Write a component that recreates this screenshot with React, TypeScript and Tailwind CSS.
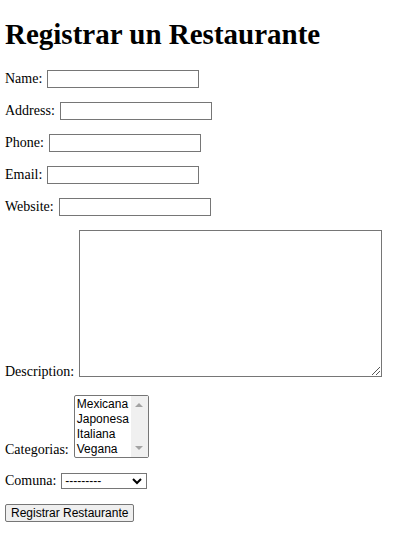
const fields = [
  { id: "name", label: "Name:", type: "text" },
  { id: "address", label: "Address:", type: "text" },
  { id: "phone", label: "Phone:", type: "tel" },
  { id: "email", label: "Email:", type: "email" },
  { id: "website", label: "Website:", type: "url" },
];

const categories = ["Mexicana", "Japonesa", "Italiana", "Vegana"];

export default function App() {
  return (
    <main className="bg-white px-[5px] pt-4 font-['Liberation_Serif',serif] text-sm leading-[18px] text-black">
      <h1 className="mb-[18px] text-[29px] leading-9 font-bold">Registrar un Restaurante</h1>
      <form className="flex flex-col items-start gap-[14px]" onSubmit={(e) => e.preventDefault()}>
        {fields.map((f) => (
          <div key={f.id} className="flex items-center gap-[5px]">
            <label htmlFor={f.id}>{f.label}</label>
            <input
              id={f.id}
              type={f.type}
              className="h-[18px] w-[152px] border border-[#767676] bg-white px-0.5 font-['Liberation_Sans',sans-serif] text-xs"
            />
          </div>
        ))}

        <div className="flex items-end gap-[5px] pb-1">
          <label htmlFor="description" className="leading-[10px]">
            Description:
          </label>
          <div className="relative flex">
            <textarea
              id="description"
              className="h-[147px] w-[303px] resize-none border border-[#767676] bg-white p-0.5 font-['Liberation_Mono',monospace] text-xs"
            />
            <svg
              aria-hidden="true"
              className="pointer-events-none absolute right-0.5 bottom-0.5 h-2 w-2"
              viewBox="0 0 8 8"
              stroke="#555"
              fill="none"
            >
              <path d="M0 8 8 0M4 8 8 4" />
            </svg>
          </div>
        </div>

        <div className="flex items-end gap-[5px]">
          <label htmlFor="categorias" className="leading-4">
            Categorias:
          </label>
          <div className="relative flex">
            <select
              id="categorias"
              multiple
              size={4}
              className="h-[63px] w-[75px] overflow-hidden rounded-xs border border-[#767676] bg-white font-['Liberation_Sans',sans-serif] text-xs"
            >
              {categories.map((c) => (
                <option key={c} className="min-h-0 px-0.5 pt-px pb-0">
                  {c}
                </option>
              ))}
            </select>
            <div
              aria-hidden="true"
              className="pointer-events-none absolute inset-y-px right-px flex w-[17px] flex-col items-center justify-between bg-[#f0f0f0] py-[7px]"
            >
              <svg className="h-1 w-2" viewBox="0 0 8 4" fill="#a3a3a3">
                <path d="M0 4 4 0 8 4Z" />
              </svg>
              <svg className="h-1 w-2" viewBox="0 0 8 4" fill="#a3a3a3">
                <path d="M0 0 4 4 8 0Z" />
              </svg>
            </div>
          </div>
        </div>

        <div className="flex items-center gap-[5px]">
          <label htmlFor="comuna">Comuna:</label>
          <div className="relative flex">
            <select
              id="comuna"
              className="h-4 w-[86px] appearance-none border border-[#767676] bg-white px-[3px] font-['Liberation_Sans',sans-serif] text-xs leading-[14px]"
            >
              <option>---------</option>
            </select>
            <svg
              aria-hidden="true"
              className="pointer-events-none absolute top-[5px] right-[5px] h-[7px] w-[10px]"
              viewBox="0 0 10 7"
              stroke="#000"
              strokeWidth="2"
              fill="none"
            >
              <path d="M1 1 5 5 9 1" />
            </svg>
          </div>
        </div>

        <button
          type="submit"
          className="h-[18px] rounded-xs border border-[#767676] bg-[#efefef] px-[5px] font-['Liberation_Sans',sans-serif] text-xs leading-4"
        >
          Registrar Restaurante
        </button>
      </form>
    </main>
  );
}
